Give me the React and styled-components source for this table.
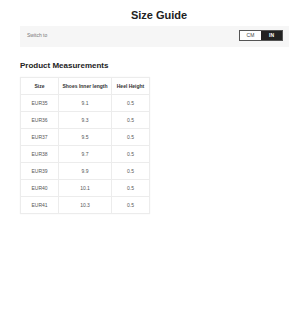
import styled, { createGlobalStyle } from "styled-components";

const GlobalStyle = createGlobalStyle`
  html, body {
    margin: 0;
    padding: 0;
    background: #ffffff;
    font-family: "Liberation Sans", Arial, sans-serif;
  }
`;

const Page = styled.div`
  width: 300px;
  height: 312px;
  padding: 7px 11px 0 20px;
  box-sizing: border-box;
  display: flex;
  flex-direction: column;
`;

const Title = styled.h1`
  margin: 0;
  font-size: 11px;
  font-weight: 700;
  color: #222;
  text-align: center;
  line-height: 16px;
  padding-left: 9px;
`;

const SwitchBar = styled.div`
  margin-top: 3px;
  height: 21px;
  background: #f6f6f6;
  display: flex;
  align-items: center;
  justify-content: space-between;
  padding: 0 6px 0 7px;
`;

const SwitchLabel = styled.span`
  font-size: 5px;
  color: #777;
  margin-top: -3px;
`;

const Toggle = styled.div`
  display: flex;
  border: 1px solid #555;
  height: 9px;
  margin-top: -3px;
`;

const ToggleOption = styled.span`
  width: 21px;
  display: flex;
  align-items: center;
  justify-content: center;
  font-size: 5px;
  font-weight: ${(p) => (p.$active ? 700 : 400)};
  color: ${(p) => (p.$active ? "#fff" : "#444")};
  background: ${(p) => (p.$active ? "#222" : "#fff")};
`;

const SectionTitle = styled.h2`
  margin: 13px 0 5px;
  font-size: 8px;
  font-weight: 700;
  color: #222;
  line-height: 12px;
`;

const Table = styled.table`
  border-collapse: collapse;
  width: 129px;
  table-layout: fixed;
  border: 1px solid #ececec;
  box-shadow: 0 0 1px rgba(0, 0, 0, 0.08);

  th, td {
    border: 1px solid #ececec;
    height: 16px;
    padding: 0;
    text-align: center;
    font-size: 5px;
  }

  th {
    font-weight: 700;
    color: #333;
  }

  td {
    color: #555;
  }
`;

const rows = [
  ["EUR35", "9.1", "0.5"],
  ["EUR36", "9.3", "0.5"],
  ["EUR37", "9.5", "0.5"],
  ["EUR38", "9.7", "0.5"],
  ["EUR39", "9.9", "0.5"],
  ["EUR40", "10.1", "0.5"],
  ["EUR41", "10.3", "0.5"],
];

export default function App() {
  return (
    <>
      <GlobalStyle />
      <Page>
        <Title>Size Guide</Title>
        <SwitchBar>
          <SwitchLabel>Switch to</SwitchLabel>
          <Toggle>
            <ToggleOption>CM</ToggleOption>
            <ToggleOption $active>IN</ToggleOption>
          </Toggle>
        </SwitchBar>
        <SectionTitle>Product Measurements</SectionTitle>
        <Table>
          <colgroup>
            <col style={{ width: 38 }} />
            <col style={{ width: 53 }} />
            <col style={{ width: 38 }} />
          </colgroup>
          <thead>
            <tr>
              <th>Size</th>
              <th>Shoes Inner length</th>
              <th>Heel Height</th>
            </tr>
          </thead>
          <tbody>
            {rows.map((r) => (
              <tr key={r[0]}>
                <td>{r[0]}</td>
                <td>{r[1]}</td>
                <td>{r[2]}</td>
              </tr>
            ))}
          </tbody>
        </Table>
      </Page>
    </>
  );
}
